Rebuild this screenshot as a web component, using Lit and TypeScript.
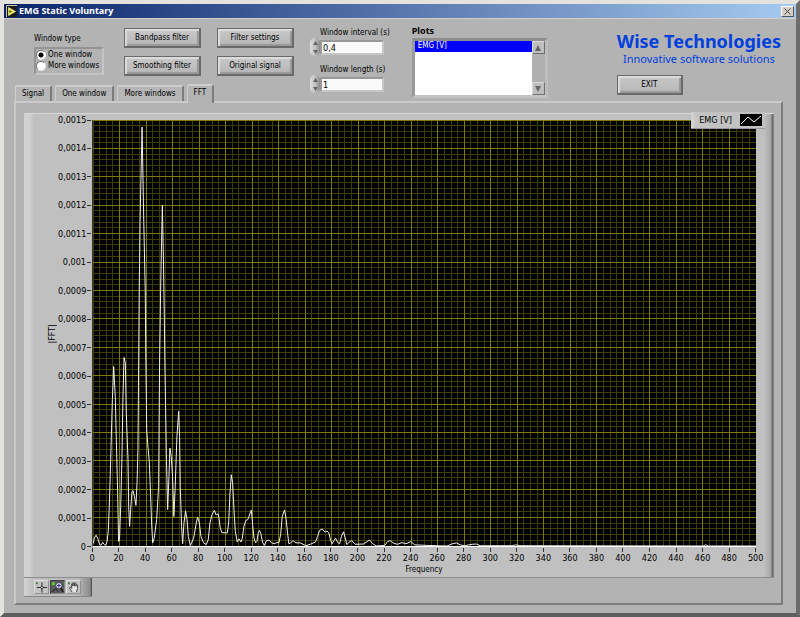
import { LitElement, html, svg, css } from "lit";
import { customElement, property, state } from "lit/decorators.js";
import { classMap } from "lit/directives/class-map.js";

/* Spectrum samples: frequency in Hz, magnitude in units of 1e-6. */
const SPECTRUM = `0,8 1,28 2.3,38 3.5,28 5,5 6,2 7.3,13 8.5,5 9.5,2 10.6,16 11.6,57 12.6,186 13.6,350 14.6,515
15.6,632 16.8,526 17.6,374 18.6,186 19.3,16 20,22 20.9,140 21.9,327 22.6,526 23.4,664 24.4,644 25.1,468
26.4,304 26.9,140 27.6,69 28.4,128 29.4,192 30.2,195 31.2,175 32.4,143 33.2,222 33.9,339 34.3,562 34.9,913
35.5,1145 37,1475 38.3,1140 39.4,900 39.8,680 40.5,410 41.2,362 42.5,292 43.2,210 44.2,81 45,11 46.2,28
48,93 49.5,210 50.2,640 51,900 51.4,1000 52.3,1200 53.2,990 53.8,800 54.2,650 55.3,327 56.3,128 57.3,245
58,345 59,315 60,245 61,104 62,210 63.3,386 64.6,474 65.3,386 65.8,210 66.8,69 67.6,8 68.6,81 69.8,124
70.9,93 71.9,34 73.4,1 75.9,28 77.9,81 78.9,102 80.2,81 81.4,34 83.4,11 85.4,5 86.9,22 88.2,81 89.7,110
91.5,126 92.9,109 94.4,114 95,98 96,63 97.2,47 101.3,46 102.3,81 103.3,186 104.3,251 105.3,222 106.3,128
107.3,52 108.8,14 110.1,25 111.6,14 112.6,28 113.8,69 115.3,90 116.8,93 119.4,127 120.4,75 121.4,28
122.6,11 123.6,16 124.6,46 125.6,55 126.6,43 127.9,13 129.2,2 130.7,18 132.7,21 134.7,11 137.2,8 138.7,13
140.2,11 141.5,40 142.7,104 144.5,127 145.7,93 146.7,46 147.7,8 149,11 150.8,19 153,11 156.3,11 160.5,1
163.8,6 167.8,14 169.4,34 170.9,55 172.9,60 174.9,49 176.4,53 177.9,46 179.2,19 180.4,8 181.4,16 182.9,28
184.4,13 186,8 187.4,34 189,50 190.2,28 191.5,5 193,13 195,19 197.7,6 204,7 208.5,21 211.5,6 214,0 220,2
222,15 224,19 227,9 229.7,6 233,12 236,8 239.7,15 242.7,4 252,2 267,0 270.6,7 274,11 277,4 280,1 286,6
289,7 292,1 316,1 319,4 322,1 460,0 462,4 464,0 500,0`;

const F_MAX = 500;
const M_MAX = 1500;

const range = (from: number, to: number, step: number) =>
  Array.from({ length: Math.floor((to - from) / step) + 1 }, (_, i) => from + i * step);

const formatMagnitude = (m: number) =>
  m === 0 ? "0" : (m / 1e6).toFixed(4).replace(/0+$/, "").replace(".", ",");

@customElement("spectrum-chart")
class SpectrumChart extends LitElement {
  static styles = css`
    :host {
      display: grid;
      grid-template-columns: 30px 34px 1fr;
      grid-template-rows: 1fr auto;
      padding: 6px 18px 2px 4px;
      font: 9px/12px var(--ui-font);
      color: #000;
      position: relative;
      background:
        linear-gradient(90deg, #d2d2d2, #cfcfcf 6px, #c0c0c0 10px) left / 12px 100% no-repeat,
        linear-gradient(90deg, #c0c0c0, #a4a4a4 7px, #666 8px, #8a8a8a) right / 10px 100% no-repeat,
        #c0c0c0;
      border-top: 1px solid #d8d8d8;
      border-bottom: 1px solid #8c8c8c;
    }
    .y-title {
      display: flex;
      align-items: center;
      justify-content: flex-end;
    }
    .y-title span {
      writing-mode: vertical-rl;
      transform: rotate(180deg);
    }
    .y-axis {
      display: flex;
      flex-direction: column;
      justify-content: space-between;
    }
    .y-tick {
      height: 0;
      display: flex;
      align-items: center;
      justify-content: flex-end;
      gap: 1px;
      padding-right: 1px;
    }
    .y-tick::after {
      content: "";
      width: 4px;
      height: 1px;
      background: #333;
    }
    .plot {
      contain: size;
      display: block;
      width: 100%;
      height: 100%;
      min-height: 200px;
      background: #000;
      box-sizing: border-box;
      border-left: 1px solid #333;
      border-bottom: 1px solid #fff;
    }
    .minor { stroke: #3e3e00; }
    .major { stroke: #7c7c00; }
    .grid { vector-effect: non-scaling-stroke; shape-rendering: crispEdges; }
    .trace {
      fill: none;
      stroke: #f0f0f0;
      vector-effect: non-scaling-stroke;
    }
    .x-axis {
      grid-column: 3;
      display: flex;
      justify-content: space-between;
      height: 17px;
    }
    .x-tick {
      width: 0;
      display: flex;
      flex-direction: column;
      align-items: center;
    }
    .x-tick::before {
      content: "";
      flex: none;
      width: 1px;
      height: 4px;
      margin-top: 1px;
      background: #333;
    }
    .x-title {
      grid-column: 3;
      text-align: center;
      font-size: 8px;
      line-height: 11px;
    }
    .key {
      position: absolute;
      top: -2px;
      right: 9px;
      height: 17px;
      box-sizing: border-box;
      display: flex;
      align-items: center;
      gap: 8px;
      padding: 0 3px 0 8px;
      background: linear-gradient(90deg, #d6d6d6, #c4c4c4 6px, #c0c0c0);
      border-bottom: 1px solid #999;
    }
  `;

  render() {
    const points = SPECTRUM.split(/\s+/).map((pair) => {
      const [f, m] = pair.split(",").map(Number);
      return `${f},${M_MAX - m}`;
    });
    const vertical = (f: number, kind: string) =>
      svg`<line class="grid ${kind}" x1=${f} x2=${f} y1="0" y2=${M_MAX} />`;
    const horizontal = (m: number, kind: string) =>
      svg`<line class="grid ${kind}" x1="0" x2=${F_MAX} y1=${m} y2=${m} />`;
    return html`
      <div class="y-title"><span>|FFT|</span></div>
      <div class="y-axis">
        ${range(0, M_MAX, 100).map((m) => html`<div class="y-tick">${formatMagnitude(M_MAX - m)}</div>`)}
      </div>
      <svg class="plot" viewBox="0 0 ${F_MAX} ${M_MAX}" preserveAspectRatio="none" role="img" aria-label="EMG spectrum">
        ${range(0, F_MAX, 5).map((f) => vertical(f, "minor"))}
        ${range(0, M_MAX, 20).map((m) => horizontal(m, "minor"))}
        ${range(20, F_MAX, 20).map((f) => vertical(f, "major"))}
        ${range(0, M_MAX, 100).map((m) => horizontal(m, "major"))}
        <polyline class="trace" points=${points.join(" ")} />
      </svg>
      <div class="x-axis">
        ${range(0, F_MAX, 20).map((f) => html`<div class="x-tick">${f}</div>`)}
      </div>
      <div class="x-title">Frequency</div>
      <div class="key">
        EMG [V]
        <svg width="22" height="12" viewBox="0 0 22 12" aria-hidden="true">
          <rect width="22" height="12" fill="#000" />
          <path d="M1 10 L8 3 L14 8 L21 2" fill="none" stroke="#fff" />
        </svg>
      </div>
    `;
  }
}

@customElement("number-control")
class NumberControl extends LitElement {
  @property() label = "";
  @property() value = "";

  static styles = css`
    :host {
      display: grid;
      grid-template-columns: 10px auto;
      font: 8px/12px var(--ui-font);
      color: #000;
    }
    label {
      grid-column: 2;
      height: 13px;
      white-space: nowrap;
    }
    .spin {
      display: flex;
      flex-direction: column;
      height: 18px;
      margin: -2px 0;
      border-radius: 5px;
      background: linear-gradient(90deg, #e0e0e0, #b8b8b8 60%, #888);
    }
    .step {
      all: unset;
      flex: 1;
      display: flex;
      align-items: center;
      justify-content: center;
    }
    input {
      box-sizing: border-box;
      width: 64px;
      height: 15px;
      margin: 0;
      padding: 0 1px;
      font: 9px/11px var(--ui-font);
      color: #000;
      background: #fafafa;
      border: 2px solid;
      border-color: #989898 #c6c6c6 #c6c6c6 #989898;
      outline: none;
    }
  `;

  private step(delta: number) {
    const next = Math.max(0, Number(this.value.replace(",", ".")) + delta);
    this.value = String(Math.round(next * 10) / 10).replace(".", ",");
  }

  render() {
    return html`
      <label for="field">${this.label}</label>
      <div class="spin">
        <button class="step" aria-label="Increase" @click=${() => this.step(0.1)}>
          <svg width="5" height="4" viewBox="0 0 5 4"><path d="M0 4 L2.5 0 L5 4 Z" fill="#666" /></svg>
        </button>
        <button class="step" aria-label="Decrease" @click=${() => this.step(-0.1)}>
          <svg width="5" height="4" viewBox="0 0 5 4"><path d="M0 0 L2.5 4 L5 0 Z" fill="#666" /></svg>
        </button>
      </div>
      <input id="field" type="text" .value=${this.value} />
    `;
  }
}

@customElement("app-root")
class AppRoot extends LitElement {
  @state() private tab = "FFT";
  @state() private tool = "zoom";

  static styles = css`
    :host {
      --ui-font: "DejaVu Sans Condensed", "Noto Sans", sans-serif;
      --bold-font: "Noto Sans", "DejaVu Sans", sans-serif;
      display: flex;
      flex-direction: column;
      box-sizing: border-box;
      min-height: 100vh;
      background: #b3b3b3;
      color: #000;
      font: 8px/12px var(--ui-font);
      border: 4px solid;
      border-color: #e4e2dc #6c6c6c #5e5e5e #e4e2dc;
    }
    button {
      font: inherit;
      color: inherit;
      margin: 0;
    }
    .titlebar {
      display: flex;
      align-items: center;
      gap: 2px;
      height: 14px;
      padding: 0 2px;
      background: linear-gradient(90deg, #0a246a, #a6caf0);
      border-bottom: 1px solid #d4d0c8;
      color: #fff;
    }
    .titlebar h1 {
      margin: 0;
      flex: 1;
      font: bold 9px/14px var(--bold-font);
    }
    .close {
      display: grid;
      place-items: center;
      box-sizing: border-box;
      width: 13px;
      height: 11px;
      padding: 0;
      background: #d4d0c8;
      border: 1px solid;
      border-color: #fff #555 #555 #fff;
    }
    .top {
      display: flex;
      padding: 0 15px 0 10px;
    }
    .left {
      display: flex;
      flex-direction: column;
      justify-content: space-between;
      padding-top: 9px;
    }
    .controls {
      display: flex;
      align-items: flex-start;
      gap: 16px;
      padding-left: 20px;
    }
    fieldset {
      margin: 5px 4px 0 0;
      padding: 0;
      border: 0;
      min-width: 70px;
    }
    legend {
      padding: 0;
      height: 14px;
    }
    .radios {
      display: flex;
      flex-direction: column;
      padding: 0 2px 2px 0;
      border: 2px solid;
      border-color: #949494 #c4c4c4 #c4c4c4 #949494;
    }
    .radio {
      display: flex;
      align-items: center;
      gap: 2px;
      height: 11px;
      white-space: nowrap;
    }
    .radio input {
      appearance: none;
      width: 10px;
      height: 10px;
      margin: 0;
      border-radius: 50%;
      box-sizing: border-box;
      border: 1px solid;
      border-color: #777 #eee #eee #777;
      background: #fff;
    }
    .radio input:checked {
      background: radial-gradient(circle, #000 2px, #fff 3px);
    }
    .buttons {
      display: flex;
      flex-direction: column;
      gap: 8px;
    }
    .button {
      box-sizing: border-box;
      width: 77px;
      height: 20px;
      padding: 0;
      white-space: nowrap;
      border: 1px solid #6a6a6a;
      border-right-width: 2px;
      border-bottom-width: 2px;
      background: linear-gradient(#c8c8c8, #b6b6b6);
      box-shadow: inset 2px 2px 1px #dcdcdc, inset -2px -2px 1px #989898;
    }
    .button.exit {
      width: 66px;
      margin: 10px 0 0;
    }
    .numbers {
      display: flex;
      flex-direction: column;
      gap: 9px;
      padding: 8px 0 0 16px;
    }
    .tabs {
      display: flex;
      align-items: flex-end;
      gap: 3px;
      height: 18px;
      padding-left: 1px;
    }
    .tab {
      box-sizing: border-box;
      height: 16px;
      padding: 0 6px;
      white-space: nowrap;
      background: #b6b6b6;
      border: 1px solid;
      border-width: 2px 2px 0 1px;
      border-color: #cfcfcf #7c7c7c #cfcfcf #cfcfcf;
      border-radius: 2px 2px 0 0;
      line-height: 12px;
    }
    .tab.active {
      height: 19px;
      margin-bottom: -2px;
      padding-bottom: 4px;
      background: #b3b3b3;
      position: relative;
    }
    .plots {
      flex: none;
      margin-left: 22px;
      padding: 6px 0 3px;
    }
    .plots label {
      display: block;
      height: 13px;
      font: bold 9px/12px var(--bold-font);
    }
    .listbox {
      display: flex;
      box-sizing: border-box;
      width: 136px;
      height: 60px;
      border: 3px solid;
      border-color: #8e8e8e #bdbdbd #c4c4c4 #9a9a9a;
    }
    .listbox select {
      appearance: none;
      flex: 1;
      min-width: 0;
      margin: 0;
      padding: 0;
      border: 0;
      border-radius: 0;
      outline: none;
      overflow: hidden;
      background: #fff;
      font: inherit;
    }
    .listbox option {
      height: 11px;
      min-height: 0;
      padding: 0 3px;
      line-height: 11px;
    }
    .listbox option:checked {
      background: linear-gradient(#0000ff, #0000ff);
      color: #fff;
      -webkit-text-fill-color: #fff;
    }
    .scroll {
      width: 13px;
      display: flex;
      flex-direction: column;
      justify-content: space-between;
      background: #b0b0b0;
    }
    .scroll button {
      display: grid;
      place-items: center;
      box-sizing: border-box;
      height: 13px;
      padding: 0;
      background: #bebebe;
      border: 1px solid;
      border-color: #dadada #707070 #707070 #dadada;
    }
    .brand {
      margin-left: auto;
      padding-top: 11px;
      color: #0040dc;
    }
    .brand h2 {
      margin: 0;
      font: bold 18px/22px var(--bold-font);
      white-space: nowrap;
    }
    .brand p {
      margin: 0;
      font: 11px/13px "Noto Sans", sans-serif;
      text-align: center;
      white-space: nowrap;
    }
    .brand .button {
      color: #000;
      display: block;
    }
    .panel {
      flex: 1;
      display: flex;
      flex-direction: column;
      margin: 0 13px 8px 10px;
      padding: 10px 7px 6px 8px;
      border: 2px solid;
      border-color: #cacaca #7c7c7c #7c7c7c #cacaca;
    }
    spectrum-chart {
      flex: 1;
    }
    .palette {
      align-self: flex-start;
      display: flex;
      align-items: center;
      gap: 1px;
      box-sizing: border-box;
      width: 68px;
      height: 19px;
      padding-left: 10px;
      background: linear-gradient(90deg, #d2d2d2, #c0c0c0 9px, #b8b8b8 54px, #8c8c8c 66px, #444);
      border-bottom: 1px solid #888;
    }
    .tool {
      display: grid;
      place-items: center;
      box-sizing: border-box;
      width: 15px;
      height: 14px;
      padding: 0;
      background: #c4c4c4;
      border: 1px solid;
      border-color: #dcdcdc #909090 #909090 #dcdcdc;
    }
    .tool.active {
      background: #5c5c5c;
      border-color: #444 #888 #888 #444;
    }
  `;

  private tabButton(name: string) {
    return html`<button
      class=${classMap({ tab: true, active: this.tab === name })}
      role="tab"
      aria-selected=${this.tab === name}
      @click=${() => (this.tab = name)}
    >${name}</button>`;
  }

  private toolButton(name: string, label: string, icon: unknown) {
    return html`<button
      class=${classMap({ tool: true, active: this.tool === name })}
      aria-label=${label}
      @click=${() => (this.tool = name)}
    ><svg width="13" height="12" viewBox="0 0 14 12">${icon}</svg></button>`;
  }

  render() {
    return html`
      <header class="titlebar">
        <svg width="11" height="12" viewBox="0 0 11 12" aria-hidden="true">
          <rect width="11" height="12" fill="#1c1c1c" />
          <path d="M0.5 12 V0.5 H11" fill="none" stroke="#c8c4a0" />
          <path d="M2.5 2.5 L9.5 6.5 L2.5 10.5 Z" fill="#f2ee50" stroke="#fffcc0" stroke-width="0.6" />
          <path d="M4 5 V8 M3 6.5 H6" stroke="#555500" stroke-width="0.8" />
        </svg>
        <h1>EMG Static Voluntary</h1>
        <button class="close" aria-label="Close">
          <svg width="7" height="7" viewBox="0 0 7 7"><path d="M0.5 0.5 L6.5 6.5 M6.5 0.5 L0.5 6.5" stroke="#444" /></svg>
        </button>
      </header>
      <section class="top">
        <div class="left">
          <div class="controls">
            <fieldset>
              <legend>Window type</legend>
              <div class="radios">
                <label class="radio"><input type="radio" name="type" checked />One window</label>
                <label class="radio"><input type="radio" name="type" />More windows</label>
              </div>
            </fieldset>
            <div class="buttons">
              <button class="button">Bandpass filter</button>
              <button class="button">Smoothing filter</button>
            </div>
            <div class="buttons">
              <button class="button">Filter settings</button>
              <button class="button">Original signal</button>
            </div>
          </div>
          <div class="tabs" role="tablist">
            ${["Signal", "One window", "More windows", "FFT"].map((name) => this.tabButton(name))}
          </div>
        </div>
        <div class="numbers">
          <number-control label="Window interval (s)" value="0,4"></number-control>
          <number-control label="Window length (s)" value="1"></number-control>
        </div>
        <div class="plots">
          <label for="plots">Plots</label>
          <div class="listbox">
            <select id="plots" size="4">
              <option selected>EMG [V]</option>
            </select>
            <div class="scroll">
              <button aria-label="Scroll up"><svg width="6" height="6" viewBox="0 0 6 6"><path d="M0 6 L3 0 L6 6 Z" fill="#666" /></svg></button>
              <button aria-label="Scroll down"><svg width="6" height="6" viewBox="0 0 6 6"><path d="M0 0 L3 6 L6 0 Z" fill="#666" /></svg></button>
            </div>
          </div>
        </div>
        <div class="brand">
          <h2>Wise Technologies</h2>
          <p>Innovative software solutions</p>
          <button class="button exit">EXIT</button>
        </div>
      </section>
      <main class="panel" role="tabpanel">
        <spectrum-chart></spectrum-chart>
        <div class="palette">
          ${this.toolButton("cursor", "Cursor", svg`
            <rect x="1" y="1" width="2" height="2" fill="#3a7a2a" />
            <path d="M7.5 1 V5 M7.5 8 V12 M2 6.5 H6 M9 6.5 H13" stroke="#222" />
            <circle cx="7.5" cy="6.5" r="1.4" fill="none" stroke="#222" stroke-width="0.8" />`)}
          ${this.toolButton("zoom", "Zoom", svg`
            <rect x="1" y="1" width="3" height="3" fill="#55dd22" />
            <path d="M1 11 L5 8 L8 11" fill="none" stroke="#111" />
            <circle cx="8.5" cy="4.5" r="3.3" fill="#dcdcff" stroke="#111" stroke-width="0.6" />
            <path d="M6.5 4.5 H10.5 M8.5 2.5 V6.5" stroke="#202080" />
            <path d="M10.5 7.5 L13 11" stroke="#111" stroke-width="1.6" />`)}
          ${this.toolButton("pan", "Pan", svg`
            <rect x="1" y="1" width="2" height="2" fill="#3a7a2a" />
            <path d="M5.5 11.5 L2.8 7.5 Q2.6 6 4 6.6 L5 7.6 V2.6 Q5.6 1.6 6.3 2.6 V5 V1.8 Q7.2 0.8 8 1.8 V5 V2 Q8.9 1.2 9.7 2.2 V5.2 V3.6 Q10.8 2.8 11.4 4 V8 L10 11.5" fill="#e4e4e4" stroke="#222" stroke-width="0.8" />`)}
        </div>
      </main>
    `;
  }
}
